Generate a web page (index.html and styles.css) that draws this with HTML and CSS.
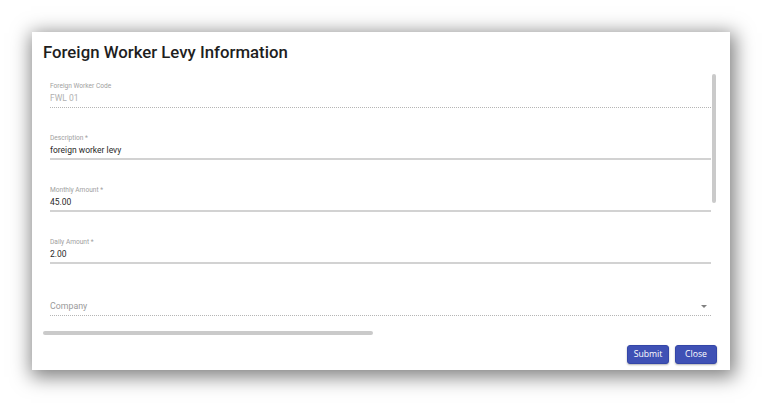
FILE: index.html
```html
<!DOCTYPE html>
<html>
<head>
<meta charset="utf-8">
<link rel="stylesheet" href="styles.css">
</head>
<body>
<div class="dialog">
  <div class="header"><h1 class="title">Foreign Worker Levy Information</h1></div>
  <div class="content">
    <div class="form">
      <div class="field dotted">
        <div class="label">Foreign Worker Code</div>
        <div class="value disabled">FWL 01</div>
      </div>
      <div class="field">
        <div class="label">Description *</div>
        <div class="value">foreign worker levy</div>
      </div>
      <div class="field">
        <div class="label">Monthly Amount *</div>
        <div class="value">45.00</div>
      </div>
      <div class="field">
        <div class="label">Daily Amount *</div>
        <div class="value">2.00</div>
      </div>
      <div class="field dotted select">
        <div class="value placeholder"><span>Company</span><span class="arrow"></span></div>
      </div>
    </div>
    <div class="scrollbar vertical"></div>
    <div class="scrollbar horizontal"></div>
  </div>
  <div class="actions">
    <button class="btn">Submit</button>
    <button class="btn">Close</button>
  </div>
</div>
</body>
</html>
```
FILE: styles.css
```css
html, body {
  margin: 0;
  padding: 0;
  background: #ffffff;
}
body {
  min-height: 403px;
  padding: 32px 0 0 32px;
  box-sizing: border-box;
  font-family: Roboto, "Liberation Sans", sans-serif;
}
.dialog {
  width: 698px;
  height: 338px;
  background: #ffffff;
  box-shadow: 2px 4px 18px 3px rgba(0, 0, 0, 0.5);
  display: flex;
  flex-direction: column;
  box-sizing: border-box;
}
.header {
  height: 42px;
  padding: 10px 0 0 11px;
  box-sizing: border-box;
  flex: none;
}
.title {
  margin: 0;
  font-family: Roboto, sans-serif;
  font-weight: 500;
  font-size: 16.8px;
  line-height: 20px;
  color: #1e1e1e;
}
.content {
  position: relative;
  height: 262px;
  margin: 0 14px 0 11px;
  overflow: hidden;
  flex: none;
}
.scrollbar {
  position: absolute;
  background: #cacaca;
  border-radius: 2px;
}
.scrollbar.vertical {
  top: 0;
  right: 0;
  width: 4px;
  height: 129px;
}
.scrollbar.horizontal {
  left: 0;
  bottom: 1px;
  width: 330px;
  height: 4px;
}
.form {
  padding-left: 7px;
}
.field {
  width: 661px;
  padding: 7.5px 0 1px;
  margin-bottom: 18.5px;
  border-bottom: 2px solid #d2d2d2;
}
.field.dotted {
  padding-bottom: 2px;
  border-bottom: 1px dotted #b5b5b5;
}
.label {
  font-size: 6.6px;
  line-height: 8px;
  height: 8px;
  color: #a0a0a0;
}
.value {
  margin-top: 2px;
  font-size: 8.5px;
  line-height: 13px;
  color: #2a2a2a;
}
.value.disabled {
  color: #b0b0b0;
}
.select {
  padding-top: 16px;
}
.value.placeholder {
  display: flex;
  justify-content: space-between;
  align-items: center;
  font-size: 8.8px;
  color: #9a9a9a;
}
.arrow {
  width: 0;
  height: 0;
  margin-right: 4px;
  border-left: 3px solid transparent;
  border-right: 3px solid transparent;
  border-top: 3px solid #808080;
}
.actions {
  display: flex;
  justify-content: flex-end;
  gap: 6px;
  padding: 9px 13px 0 0;
}
.btn {
  min-width: 42px;
  height: 19px;
  padding: 0 5px;
  border: 1px solid #3446a8;
  border-radius: 3px;
  background: #3f51b5;
  color: #ffffff;
  font-family: "Open Sans", sans-serif;
  font-size: 8.7px;
  line-height: 17px;
  box-shadow: 0 1px 2px rgba(0, 0, 0, 0.3);
}
```
